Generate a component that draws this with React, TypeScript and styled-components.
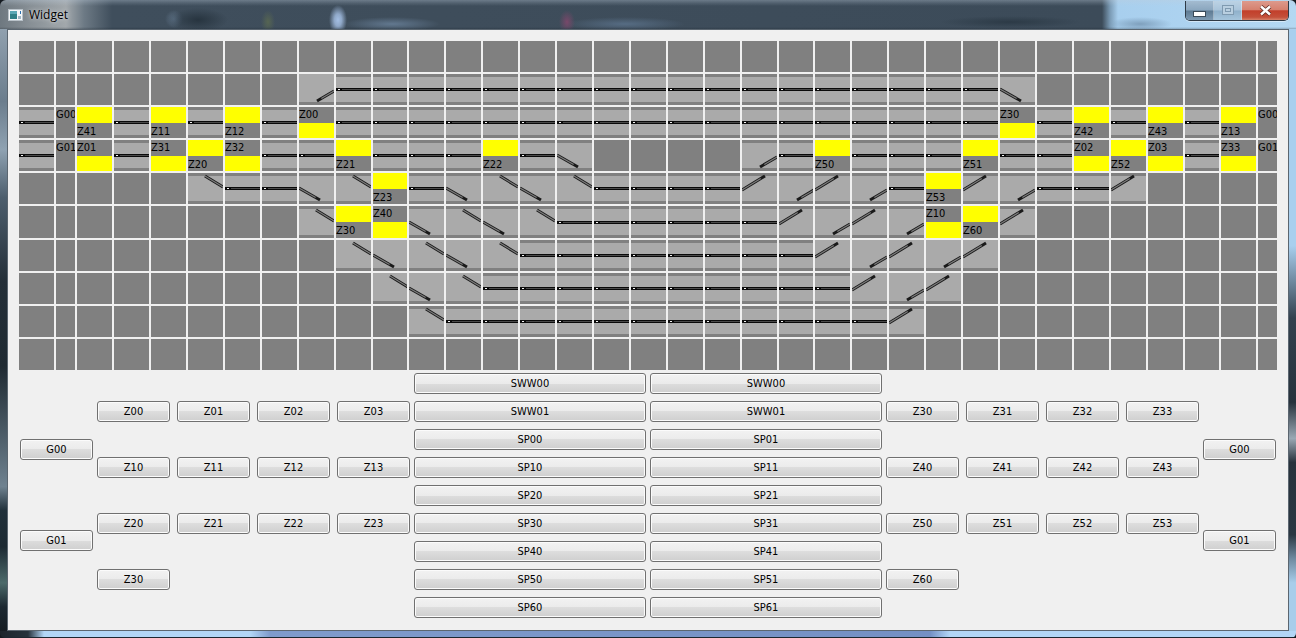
import React from "react";
import styled, { createGlobalStyle } from "styled-components";

const UI_FONT = `"DejaVu Sans Condensed", "Liberation Sans", sans-serif`;

const Global = createGlobalStyle`
  html, body { margin: 0; padding: 0; overflow: hidden; background: #10161c; }
  #root { width: 1296px; height: 638px; }
`;

const Desktop = styled.div`
  width: 1296px;
  height: 638px;
  display: flex;
  flex-direction: column;
  background: #141a20;
  overflow: hidden;
`;

const TitleBar = styled.header`
  flex: 0 0 29px;
  display: flex;
  align-items: flex-start;
  padding: 0 7px 0 8px;
  box-sizing: border-box;
  border-radius: 6px 6px 0 0;
  background:
    linear-gradient(180deg, rgba(190, 205, 220, 0.36) 0, rgba(190, 205, 220, 0.16) 3px, rgba(255, 255, 255, 0) 6px, rgba(255, 255, 255, 0) 27px, rgba(20, 30, 40, 0.25) 29px),
    radial-gradient(ellipse 9px 15px at 338px 20px, #a4bfe4 0, #a4bfe4cc 40%, #a4bfe400 100%),
    radial-gradient(ellipse 48px 7px at 392px 24px, #62788f 0, #62788f00 100%),
    radial-gradient(ellipse 30px 12px at 198px 20px, #27343f 0, #27343f00 100%),
    radial-gradient(ellipse 9px 9px at 174px 19px, #5c7084 0, #5c708400 100%),
    radial-gradient(ellipse 7px 12px at 268px 22px, #566552 0, #56655200 100%),
    radial-gradient(ellipse 8px 12px at 567px 22px, #78486a 0, #78486a00 100%),
    radial-gradient(ellipse 60px 7px at 625px 24px, #566c83 0, #566c8300 100%),
    radial-gradient(ellipse 70px 6px at 1010px 22px, #2c3a46 0, #2c3a4600 100%),
    radial-gradient(ellipse 32px 7px at 1140px 24px, #7fa0bd 0, #7fa0bd00 100%),
    linear-gradient(90deg, #6e7880 0, #878f95 30px, #a2a8ac 66px, #6d7a85 84px, #3f4e5c 112px, #3c4b59 1102px, #7a9ab4 1110px, #a8cfee 1118px, #b4d8f2 1296px);
`;

const AppIcon = styled.svg`
  flex: none;
  margin-top: 9px;
  width: 15px;
  height: 12px;
`;

const TitleText = styled.span`
  margin: 7px 0 0 6px;
  font: 12px "Open Sans", "Noto Sans", sans-serif;
  line-height: 16px;
  color: #000;
  text-shadow: 0 0 5px rgba(255, 255, 255, 0.65), 0 0 2px rgba(255, 255, 255, 0.4);
`;

const WindowControls = styled.div`
  margin: 1px 0 0 auto;
  display: flex;
  height: 19px;
  border: 1px solid #2e3a46;
  border-top: none;
  border-radius: 0 0 5px 5px;
  overflow: hidden;
  box-shadow: 0 1px 0 rgba(255, 255, 255, 0.45);
`;

const WindowButton = styled.div<{ $kind: "min" | "max" | "close" }>`
  width: ${(p) => (p.$kind === "close" ? 46 : 28)}px;
  display: flex;
  align-items: flex-start;
  justify-content: center;
  padding-top: ${(p) => (p.$kind === "min" ? 10 : 4)}px;
  box-sizing: border-box;
  border-right: ${(p) => (p.$kind === "close" ? "none" : "1px solid rgba(255,255,255,0.35)")};
  background: ${(p) =>
    p.$kind === "close"
      ? "linear-gradient(180deg, #dd9a8c 0, #d6816f 45%, #c23f2b 52%, #c4503a 85%, #d5826a 100%)"
      : p.$kind === "max"
        ? "linear-gradient(180deg, #bcd2e4 0, #a9c4da 48%, #8fb0ca 52%, #a6c5dc 100%)"
        : "linear-gradient(180deg, #a3bbd0 0, #8aa6be 48%, #5e7a92 52%, #7d9ab2 100%)"};
`;

const ClientRow = styled.div`
  flex: 0 0 602px;
  display: flex;
`;

const SideFrame = styled.div<{ $right?: boolean }>`
  flex: 0 0 7px;
  background: ${(p) =>
    p.$right
      ? "linear-gradient(180deg, #a9cfee 0, #a9cfee 36%, #33414e 48%, #27323c 62%, #9aa8b4 68%, #27323c 72%, #2b3742 84%, #6f8aa0 88%, #a8cdea 92%, #a8cdea 100%)"
      : "linear-gradient(180deg, #90a0ae 0, #6b7d8d 12%, #8fa2b2 20%, #4d5e6d 28%, #242f38 42%, #1f2a32 56%, #6f8290 76%, #20303a 80%, #1d2a33 86%, #4c6a6a 92%, #1c2831 96%, #151c22 100%)"};
`;

const Client = styled.main`
  flex: 1;
  box-sizing: border-box;
  border: 1px solid #5b6670;
  background: #f0f0f0;
  padding: 11px;
`;

const BottomFrame = styled.footer`
  flex: 0 0 7px;
  border-radius: 0 0 5px 5px;
  background:
    linear-gradient(180deg, rgba(0, 0, 0, 0) 0, rgba(0, 0, 0, 0) 6px, #1c2730 6px),
    linear-gradient(90deg, #1c242b 0, #26323c 28px, #b2d6f6 44px, #b2d6f6 250px, #7f9bcc 270px, #7490c4 930px, #b2d6f6 950px, #b2d6f6 1296px);
`;

const TrackGrid = styled.div<{ $columns: string; $rows: string }>`
  display: grid;
  grid-template-columns: ${(p) => p.$columns};
  grid-template-rows: ${(p) => p.$rows};
  gap: 2px;
`;

const EmptyCell = styled.div`
  background: #808080;
`;

const TrackCell = styled.div<{ $noTop?: boolean; $tall?: boolean }>`
  overflow: hidden;
  background: linear-gradient(
    180deg,
    ${(p) => (p.$noTop ? "#aaaaaa" : "#808080")} 0 3px,
    #aaaaaa 3px calc(100% - 3px),
    #808080 calc(100% - 3px) 100%
  );
  svg {
    display: block;
    width: 100%;
    height: 31px;
    margin-top: ${(p) => (p.$tall ? 1 : 0)}px;
  }
`;

const CellLabel = styled.span<{ $low?: boolean }>`
  display: block;
  padding-top: ${(p) => (p.$low ? 1 : 0)}px;
  font: 11px/15px ${UI_FONT};
  color: #000;
  white-space: nowrap;
`;

const GateCell = styled.div`
  background: #808080;
  overflow: hidden;
`;

const SignalCell = styled.div`
  display: grid;
  grid-template-rows: 16px 1fr;
  background: #808080;
  overflow: hidden;
`;

const Lamp = styled.div`
  background: #ffff00;
`;

const ButtonPanel = styled.div`
  display: flex;
  gap: 4px;
  margin: 3px 0 0 1px;
`;

const GateColumn = styled.div`
  display: flex;
  flex-direction: column;
  gap: 70px;
  padding-top: 66px;
`;

const ZoneGrid = styled.div`
  display: grid;
  grid-template-columns: repeat(4, 73px);
  grid-template-rows: repeat(9, 21px);
  gap: 7px;
`;

const RouteGrid = styled.div`
  display: grid;
  grid-template-columns: repeat(2, 232px);
  grid-template-rows: repeat(9, 21px);
  gap: 7px 4px;
`;

const PanelButton = styled.button<{ $row?: number; $col?: number; $wide?: boolean }>`
  width: ${(p) => (p.$wide ? 232 : 73)}px;
  height: 21px;
  padding: 1px 0 0;
  box-sizing: border-box;
  grid-row: ${(p) => p.$row ?? "auto"};
  grid-column: ${(p) => p.$col ?? "auto"};
  border: 1px solid #707070;
  border-radius: 3px;
  box-shadow: inset 0 0 0 1px #fbfbfb;
  background: linear-gradient(180deg, #f2f2f2 0, #ebebeb 50%, #dddddd 50%, #cfcfcf 100%);
  font: 11px/18px ${UI_FONT};
  color: #000;
  text-align: center;
`;

const rep = (token: string, n: number) => Array<string>(n).fill(token);

const LAYOUT: string[][] = [
  rep(".", 35),
  [...rep(".", 8), "c", ...rep("H", 18), "A", ...rep(".", 7)],
  ["H", "G:G00", "T:Z41", "H", "T:Z11", "H", "T:Z12", "H", "L:Z00", ...rep("H", 18), "L:Z30", "H", "T:Z42", "H", "T:Z43", "H", "T:Z13", "G:G00"],
  ["H", "G:G01", "L:Z01", "H", "L:Z31", "T:Z20", "L:Z32", "H", "H", "T:Z21", "H", "H", "H", "T:Z22", "H", "A", ...rep(".", 4), "C", "H", "T:Z50", "H", "H", "H", "T:Z51", "H", "H", "L:Z02", "T:Z52", "L:Z03", "H", "L:Z33", "G:G01"],
  [...rep(".", 5), "B", "H", "H", "A", "B", "T:Z23", "H", "A", "B", "A", "B", ...rep("H", 4), "D", "C", "D", "C", "H", "T:Z53", "D", "C", "H", "H", "D", ...rep(".", 4)],
  [...rep(".", 8), "B", "T:Z30", "L:Z40", "A", "B", "A", "B", ...rep("H", 6), "D", "C", "D", "C", "L:Z10", "T:Z60", "D", ...rep(".", 7)],
  [...rep(".", 9), "b", "a", "b", "a", "b", ...rep("H", 8), "d", "c", "d", "c", "d", ...rep(".", 8)],
  [...rep(".", 10), "b", "a", "b", ...rep("H", 10), "d", "c", "d", ...rep(".", 9)],
  [...rep(".", 11), "B", ...rep("H", 12), "D", ...rep(".", 10)],
  rep(".", 35),
];

const COLUMN_WIDTHS = Array.from({ length: 35 }, (_, i) => {
  if (i === 1 || i === 34) return 19;
  if (i === 10 || i === 21 || i === 32) return 34;
  return 35;
});
const ROW_HEIGHTS = LAYOUT.map((_, i) => (i === 5 ? 32 : 31));

const HorizontalTrack = () => (
  <svg aria-hidden="true">
    <rect x="0" y="14" width="36" height="3" fill="#0a0a0a" />
    <rect x="6" y="15" width="30" height="1" fill="#4a4a4a" />
    <rect x="2" y="15" width="2" height="1" fill="#f4f4f4" />
  </svg>
);

const DIAGONALS: Record<string, { from: [number, number]; to: [number, number]; arrow: boolean }> = {
  A: { from: [0, 15], to: [21, 27], arrow: true },
  B: { from: [17, 3], to: [35, 14], arrow: false },
  C: { from: [35, 17], to: [18, 27], arrow: true },
  D: { from: [0, 17], to: [23, 3], arrow: true },
};

const DiagonalTrack = ({ kind }: { kind: string }) => {
  const { from, to, arrow } = DIAGONALS[kind];
  const [x1, y1] = from;
  const [x2, y2] = to;
  const dx = x2 - x1;
  const dy = y2 - y1;
  const len = Math.hypot(dx, dy);
  const ux = dx / len;
  const uy = dy / len;
  const innerEnd = arrow ? len - 5 : len;
  return (
    <svg aria-hidden="true">
      <line x1={x1} y1={y1} x2={x2} y2={y2} stroke="#1a1a1a" strokeWidth="3" />
      <line x1={x1} y1={y1} x2={x1 + ux * innerEnd} y2={y1 + uy * innerEnd} stroke="#7d7d7d" strokeWidth="1.2" />
    </svg>
  );
};

const Cell = ({ token, tall }: { token: string; tall: boolean }) => {
  if (token === ".") return <EmptyCell />;
  if (token === "H")
    return (
      <TrackCell $tall={tall}>
        <HorizontalTrack />
      </TrackCell>
    );
  if (token.startsWith("G:"))
    return (
      <GateCell>
        <CellLabel>{token.slice(2)}</CellLabel>
      </GateCell>
    );
  if (token.startsWith("T:"))
    return (
      <SignalCell>
        <Lamp />
        <CellLabel $low>{token.slice(2)}</CellLabel>
      </SignalCell>
    );
  if (token.startsWith("L:"))
    return (
      <SignalCell>
        <CellLabel>{token.slice(2)}</CellLabel>
        <Lamp />
      </SignalCell>
    );
  const lower = token === token.toLowerCase();
  return (
    <TrackCell $noTop={lower} $tall={tall}>
      <DiagonalTrack kind={token.toUpperCase()} />
    </TrackCell>
  );
};

const ZONES_LEFT = [
  ["Z00", "Z01", "Z02", "Z03"],
  ["Z10", "Z11", "Z12", "Z13"],
  ["Z20", "Z21", "Z22", "Z23"],
  ["Z30"],
];
const ZONES_RIGHT = [
  ["Z30", "Z31", "Z32", "Z33"],
  ["Z40", "Z41", "Z42", "Z43"],
  ["Z50", "Z51", "Z52", "Z53"],
  ["Z60"],
];
const ROUTES: [string, string][] = [
  ["SWW00", "SWW00"],
  ["SWW01", "SWW01"],
  ["SP00", "SP01"],
  ["SP10", "SP11"],
  ["SP20", "SP21"],
  ["SP30", "SP31"],
  ["SP40", "SP41"],
  ["SP50", "SP51"],
  ["SP60", "SP61"],
];

const Zones = ({ zones }: { zones: string[][] }) => (
  <ZoneGrid>
    {zones.flatMap((line, r) =>
      line.map((name, c) => (
        <PanelButton key={name} $row={r * 2 + 2} $col={c + 1}>
          {name}
        </PanelButton>
      ))
    )}
  </ZoneGrid>
);

const Gates = () => (
  <GateColumn>
    <PanelButton>G00</PanelButton>
    <PanelButton>G01</PanelButton>
  </GateColumn>
);

export default function App() {
  return (
    <>
      <Global />
      <Desktop>
        <TitleBar>
          <AppIcon viewBox="0 0 15 12" aria-hidden="true">
            <rect x="0.5" y="0.5" width="14" height="11" fill="#f4f6f8" stroke="#b9c2c9" />
            <rect x="2" y="2" width="7" height="8" fill="#2f7f86" />
            <rect x="2" y="2" width="7" height="3" fill="#5aa7b4" />
            <rect x="10" y="7" width="3" height="3" fill="#9fb4c2" />
            <rect x="12" y="2" width="1" height="3" fill="#2a6fb0" />
          </AppIcon>
          <TitleText>Widget</TitleText>
          <WindowControls>
            <WindowButton $kind="min">
              <svg width="13" height="6" aria-hidden="true">
                <rect x="0.5" y="0.5" width="12" height="5" fill="#fff" stroke="#3a4a58" />
              </svg>
            </WindowButton>
            <WindowButton $kind="max">
              <svg width="12" height="10" aria-hidden="true">
                <rect x="0.5" y="0.5" width="11" height="9" fill="#b9cfe0" stroke="#7f9ab0" />
                <rect x="3.5" y="3.5" width="5" height="3" fill="none" stroke="#7f9ab0" />
              </svg>
            </WindowButton>
            <WindowButton $kind="close">
              <svg width="13" height="11" aria-hidden="true">
                <path d="M2 1.5 L11 9.5 M11 1.5 L2 9.5" stroke="#5a2a22" strokeWidth="4" />
                <path d="M2 1.5 L11 9.5 M11 1.5 L2 9.5" stroke="#fff" strokeWidth="2.4" />
              </svg>
            </WindowButton>
          </WindowControls>
        </TitleBar>
        <ClientRow>
          <SideFrame />
          <Client>
            <TrackGrid
              $columns={COLUMN_WIDTHS.map((w) => `${w}px`).join(" ")}
              $rows={ROW_HEIGHTS.map((h) => `${h}px`).join(" ")}
            >
              {LAYOUT.flatMap((row, r) =>
                row.map((token, c) => <Cell key={`${r}-${c}`} token={token} tall={r === 5} />)
              )}
            </TrackGrid>
            <ButtonPanel>
              <Gates />
              <Zones zones={ZONES_LEFT} />
              <RouteGrid>
                {ROUTES.flatMap(([a, b], i) => [
                  <PanelButton key={`a${i}`} $wide>
                    {a}
                  </PanelButton>,
                  <PanelButton key={`b${i}`} $wide>
                    {b}
                  </PanelButton>,
                ])}
              </RouteGrid>
              <Zones zones={ZONES_RIGHT} />
              <Gates />
            </ButtonPanel>
          </Client>
          <SideFrame $right />
        </ClientRow>
        <BottomFrame />
      </Desktop>
    </>
  );
}
